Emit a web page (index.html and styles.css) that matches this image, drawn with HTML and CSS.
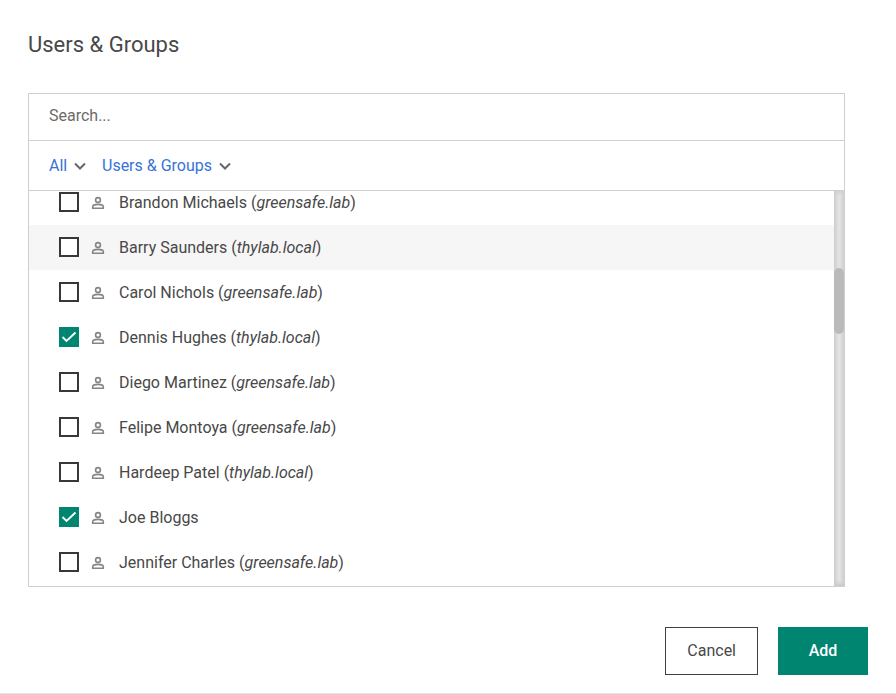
FILE: index.html
```html
<!DOCTYPE html>
<html lang="en">
<head>
<meta charset="utf-8">
<meta name="viewport" content="width=device-width, initial-scale=1">
<title>Users &amp; Groups</title>
<link rel="stylesheet" href="styles.css">
</head>
<body>
<svg class="sprite" aria-hidden="true">
  <symbol id="person" viewBox="0 0 14 14">
    <circle cx="7" cy="4" r="2.4"/>
    <path d="M1.7 12.2v-1.5C1.7 9.1 4.4 8.4 7 8.4s5.3.7 5.3 2.3v1.5z"/>
  </symbol>
  <symbol id="chevron" viewBox="0 0 12 8">
    <path d="M1 1.5l5 5 5-5"/>
  </symbol>
</svg>
<form class="dialog">
  <h1 class="title">Users &amp; Groups</h1>
  <div class="picker">
    <input class="search" type="text" placeholder="Search..." aria-label="Search">
    <div class="filters">
      <span class="filter"><select aria-label="Domain"><option>All</option></select><svg class="chevron"><use href="#chevron"/></svg></span>
      <span class="filter"><select aria-label="Type"><option>Users &amp; Groups</option></select><svg class="chevron"><use href="#chevron"/></svg></span>
    </div>
    <div class="viewport">
      <div class="list">
        <label class="row"><input type="checkbox"><svg class="person"><use href="#person"/></svg><span>Brandon Michaels (<em>greensafe.lab</em>)</span></label>
        <label class="row active"><input type="checkbox"><svg class="person"><use href="#person"/></svg><span>Barry Saunders (<em>thylab.local</em>)</span></label>
        <label class="row"><input type="checkbox"><svg class="person"><use href="#person"/></svg><span>Carol Nichols (<em>greensafe.lab</em>)</span></label>
        <label class="row"><input type="checkbox" checked><svg class="person"><use href="#person"/></svg><span>Dennis Hughes (<em>thylab.local</em>)</span></label>
        <label class="row"><input type="checkbox"><svg class="person"><use href="#person"/></svg><span>Diego Martinez (<em>greensafe.lab</em>)</span></label>
        <label class="row"><input type="checkbox"><svg class="person"><use href="#person"/></svg><span>Felipe Montoya (<em>greensafe.lab</em>)</span></label>
        <label class="row"><input type="checkbox"><svg class="person"><use href="#person"/></svg><span>Hardeep Patel (<em>thylab.local</em>)</span></label>
        <label class="row"><input type="checkbox" checked><svg class="person"><use href="#person"/></svg><span>Joe Bloggs</span></label>
        <label class="row"><input type="checkbox"><svg class="person"><use href="#person"/></svg><span>Jennifer Charles (<em>greensafe.lab</em>)</span></label>
      </div>
      <div class="track"><div class="thumb"></div></div>
    </div>
  </div>
  <div class="actions">
    <button class="button" type="button">Cancel</button>
    <button class="button primary" type="submit">Add</button>
  </div>
</form>
</body>
</html>
```
FILE: styles.css
```css
* {
  box-sizing: border-box;
}

body {
  margin: 0;
  background: #fff;
  color: #484848;
  font: 16px/24px Roboto, "Liberation Sans", sans-serif;
}

input,
select,
button {
  font: inherit;
}

.sprite {
  display: none;
}

.dialog {
  padding: 29px 28px 18px;
  border-bottom: 1px solid #e2e2e2;
}

.title {
  margin: 0 0 32px;
  font-size: 22px;
  font-weight: 400;
  line-height: 32px;
}

.picker {
  margin-right: 23px;
  border: 1px solid #cfcfcf;
}

.search {
  display: block;
  width: 100%;
  height: 47px;
  padding: 0 20px 4px;
  border: 0;
  border-bottom: 1px solid #cfcfcf;
  background: none;
  outline: 0;
}

.search::placeholder {
  color: #6b6b6b;
  opacity: 1;
}

.filters {
  display: flex;
  align-items: center;
  gap: 16px;
  height: 50px;
  padding: 0 20px;
  border-bottom: 1px solid #cfcfcf;
}

.filter {
  display: flex;
  align-items: center;
  gap: 6px;
}

.filter select {
  appearance: none;
  padding: 0;
  border: 0;
  background: none;
  color: #3873d9;
}

.chevron {
  width: 12px;
  height: 8px;
  fill: none;
  stroke: #666;
  stroke-width: 2;
}

.viewport {
  display: flex;
  height: 395px;
  overflow: hidden;
}

/* The list is scrolled part of the way into its first row. */
.list {
  flex: 1;
  margin-top: -11px;
}

.row {
  display: flex;
  align-items: center;
  height: 45px;
  padding: 0 0 1px 30px;
}

.row.active {
  background: #f6f6f6;
}

.row input {
  appearance: none;
  width: 20px;
  height: 20px;
  margin: 0;
  border: 2px solid #383838;
  background: #fff;
}

.row input:checked {
  border: 0;
  background: #008571 url('data:image/svg+xml,<svg xmlns="http://www.w3.org/2000/svg" viewBox="0 0 20 20"><path d="M3.5 10l4 4L16.5 5.5" fill="none" stroke="white" stroke-width="1.8"/></svg>') center / 20px;
}

.person {
  width: 14px;
  height: 14px;
  margin: 2px 14px 0 12px;
  fill: none;
  stroke: #858585;
  stroke-width: 1.6;
}

.row span {
  padding-top: 2px;
}

.track {
  width: 10px;
  padding-top: 77px;
  background: linear-gradient(90deg, #d8d8d8, #e3e3e3 50%, #dfdfdf);
  box-shadow: inset 0 2px 4px #d0d0d0, inset 0 -2px 4px #c4c4c4;
}

.thumb {
  height: 66px;
  border-radius: 5px;
  background: #bababa;
}

.actions {
  display: flex;
  justify-content: flex-end;
  gap: 20px;
  margin-top: 40px;
}

.button {
  min-width: 90px;
  height: 48px;
  padding: 0 21px;
  border: 1px solid #404040;
  background: #fff;
  color: #484848;
}

.button.primary {
  border-color: #008571;
  background: #008571;
  color: #fff;
  font-weight: 500;
}
```
